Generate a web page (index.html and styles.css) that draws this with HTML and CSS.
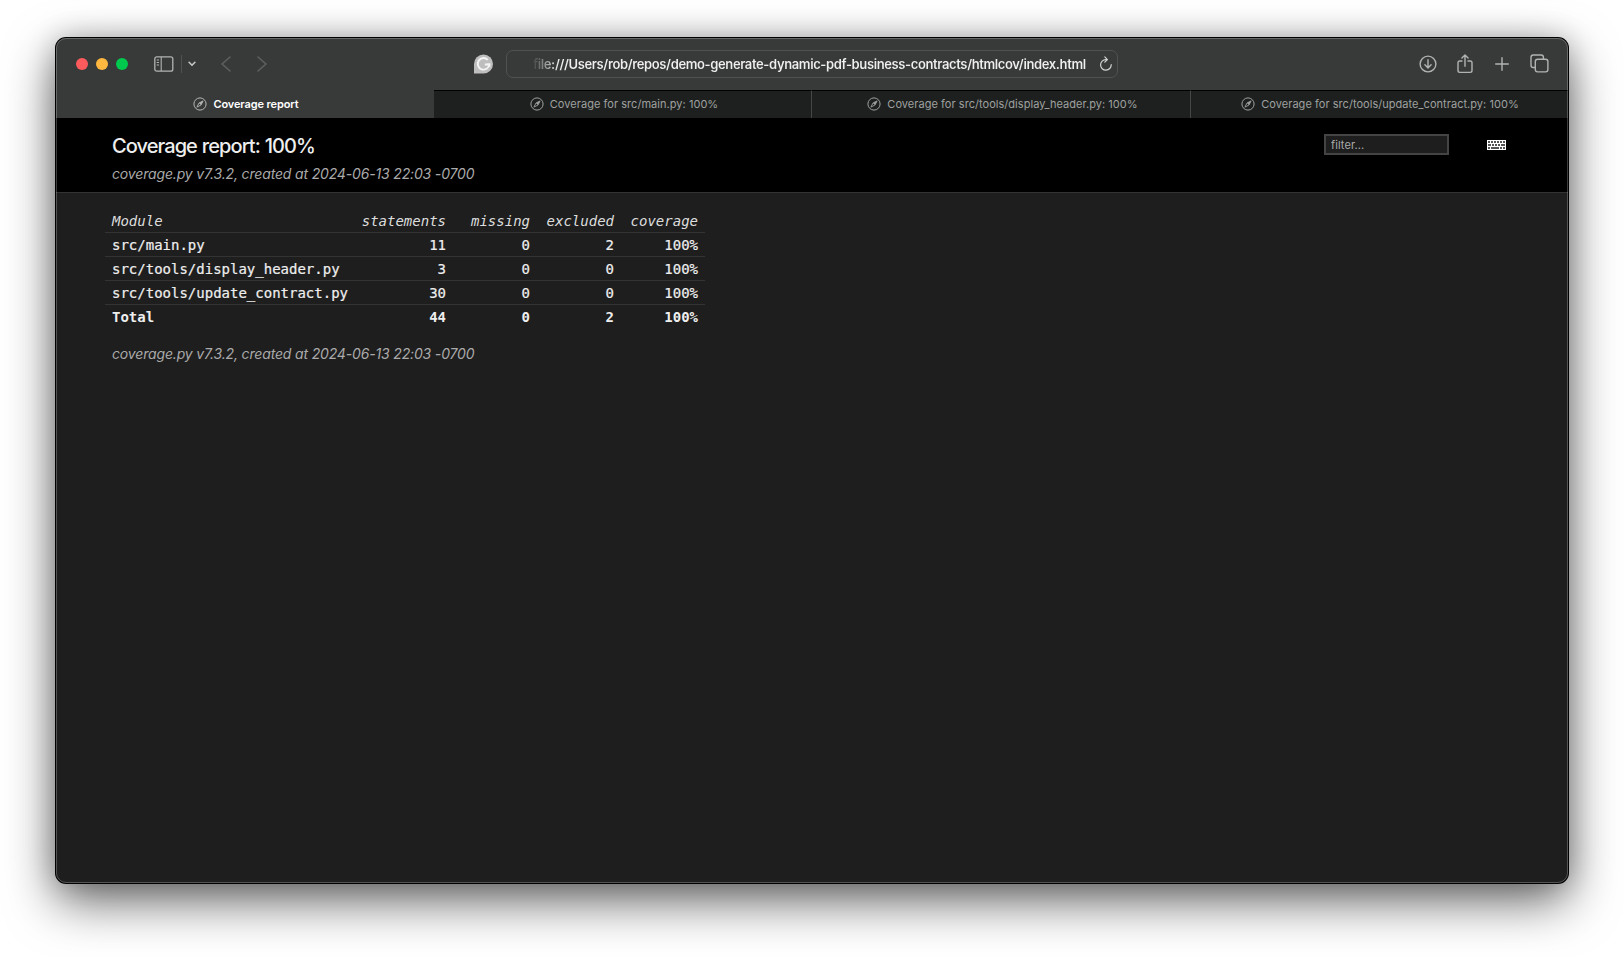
FILE: index.html
```html
<!DOCTYPE html>
<html lang="en">
<head>
<meta charset="utf-8">
<title>Coverage report</title>
<link rel="stylesheet" href="styles.css">
</head>
<body>
<svg class="defs" width="0" height="0"><symbol id="compass" viewBox="0 0 14 14"><circle cx="7" cy="7" r="6.1" fill="none" stroke="currentColor"/><path d="M10.1 3.9 8 8 3.9 10.1 6 6Z" fill="none" stroke="currentColor" stroke-width=".9" stroke-linejoin="round"/><path d="M10.1 3.9 8 8 6 6Z" fill="currentColor"/></symbol></svg>
<div class="window">
  <div class="toolbar">
    <div class="left">
      <i class="dot red"></i><i class="dot amber"></i><i class="dot green"></i>
      <svg class="sidebar" width="20" height="16" viewBox="0 0 20 16" fill="none" stroke="#b1b3b2" stroke-width="1.3"><rect x=".8" y=".8" width="18" height="14.4" rx="2"/><path d="M7.2 1v14M2.7 4h2.3M2.7 6.5h2.3M2.7 9h2.3" stroke-width="1.1"/></svg>
      <i class="divider"></i>
      <svg class="chevron" width="8" height="6" viewBox="0 0 8 6" fill="none" stroke="#c5c6c5" stroke-width="1.6" stroke-linecap="round" stroke-linejoin="round"><path d="M1.1 1.3 4 4.2 6.9 1.3"/></svg>
      <svg class="back" width="10" height="16" viewBox="0 0 10 16" fill="none" stroke="#5f6160" stroke-width="1.5" stroke-linecap="round" stroke-linejoin="round"><path d="M9 1 1 8l8 7"/></svg>
      <svg width="10" height="16" viewBox="0 0 10 16" fill="none" stroke="#5f6160" stroke-width="1.5" stroke-linecap="round" stroke-linejoin="round"><path d="m1 1 8 7-8 7"/></svg>
    </div>
    <div class="center">
      <svg width="19" height="20" viewBox="0 0 19 20"><path d="M0 19.5V10a9.5 9.5 0 1 1 9.5 9.5Z" fill="#bdbebd"/><path d="M13.8 5.9A5.8 5.8 0 1 0 15.3 10.5H10.8" fill="none" stroke="#f4f4f4" stroke-width="1.9"/><path d="M12.6 9.6h3.7v3.9Z" fill="#f4f4f4"/></svg>
      <div class="address"><span class="url">file:///Users/rob/repos/demo-generate-dynamic-pdf-business-contracts/htmlcov/index.html</span>
      <svg width="14" height="16" viewBox="0 0 14 16" fill="none" stroke="#d2d3d2" stroke-width="1.2" stroke-linecap="round" stroke-linejoin="round"><path d="M12.2 8.7A5.3 5.3 0 1 1 6.9 3.6h1.2M5.8.9l2.6 2.7-2.6 2.6"/></svg></div>
    </div>
    <div class="right">
      <svg width="18" height="18" viewBox="0 0 18 18"><circle cx="9" cy="9" r="7.9"/><path d="M9 4.8v8M5.9 9.8 9 12.9l3.1-3.1"/></svg>
      <svg class="share" width="16" height="20" viewBox="0 0 16 20"><path d="M5 7H2.8Q1 7 1 8.8v7.8q0 1.8 1.8 1.8h10.4q1.8 0 1.8-1.8V8.8Q15 7 13.2 7H11M8 12.3V1M4.9 3.9 8 .9l3.1 3"/></svg>
      <svg width="14" height="14" viewBox="0 0 14 14"><path d="M7 .7v12.6M.7 7h12.6"/></svg>
      <svg width="19" height="19" viewBox="0 0 19 19"><rect x="5.3" y="5.3" width="12.6" height="12.6" rx="2.3"/><path d="M5.3 13.5H3.2Q1 13.5 1 11.3V3.2Q1 1 3.2 1h8q2.2 0 2.2 2.2v2.1"/></svg>
    </div>
  </div>
  <div class="tabs">
    <div class="tab active"><svg width="14" height="14"><use href="#compass"/></svg><span>Coverage report</span></div>
    <div class="tab"><svg width="14" height="14"><use href="#compass"/></svg><span>Coverage for src/main.py: 100%</span></div>
    <div class="tab"><svg width="14" height="14"><use href="#compass"/></svg><span>Coverage for src/tools/display_header.py: 100%</span></div>
    <div class="tab"><svg width="14" height="14"><use href="#compass"/></svg><span>Coverage for src/tools/update_contract.py: 100%</span></div>
  </div>
  <header class="header">
    <div class="heading">
      <h1>Coverage report: 100%</h1>
      <p class="meta">coverage.py v7.3.2, created at 2024-06-13 22:03 -0700</p>
    </div>
    <input class="filter" placeholder="filter..." aria-label="filter">
    <svg class="keyboard" width="19" height="10" viewBox="0 0 19 10" shape-rendering="crispEdges"><path d="M0 0h19v10H0Z" fill="#fff"/><path d="M1 2h17M1 8h17" stroke="#555" stroke-width="2" stroke-dasharray="2 1"/><path d="M1 5h3M5 5h2M8 5h2M11 5h2M14 5h4M4 8h8" stroke="#555" stroke-width="2"/></svg>
  </header>
  <main class="content">
    <table class="index">
      <colgroup><col class="module"><col class="statements"><col class="number"><col class="number"><col class="number"></colgroup>
      <thead><tr><th>Module</th><th>statements</th><th>missing</th><th>excluded</th><th>coverage</th></tr></thead>
      <tbody>
        <tr><td>src/main.py</td><td>11</td><td>0</td><td>2</td><td>100%</td></tr>
        <tr><td>src/tools/display_header.py</td><td>3</td><td>0</td><td>0</td><td>100%</td></tr>
        <tr><td>src/tools/update_contract.py</td><td>30</td><td>0</td><td>0</td><td>100%</td></tr>
      </tbody>
      <tfoot><tr><td>Total</td><td>44</td><td>0</td><td>2</td><td>100%</td></tr></tfoot>
    </table>
    <p class="meta">coverage.py v7.3.2, created at 2024-06-13 22:03 -0700</p>
  </main>
</div>
</body>
</html>
```
FILE: styles.css
```css
* { box-sizing: border-box; }
body { margin: 0; height: 957px; overflow: hidden; padding: 38px 56px 0; background: #fff; font-family: Inter, "Liberation Sans", sans-serif; }
svg { display: block; flex: none; }
.defs { position: absolute; }
.window { position: relative; width: 1512px; height: 845px; border-radius: 10px; background: #1e1e1e; display: flex; flex-direction: column; box-shadow: 0 0 0 1px #000, 0 18px 50px rgba(0,0,0,.6), 0 0 28px rgba(0,0,0,.22); }
.window::after { content: ""; position: absolute; inset: 0; border: 1px solid rgba(255,255,255,.24); border-radius: 10px; pointer-events: none; }
.toolbar { height: 52px; display: flex; align-items: center; background: #383a39; border-radius: 10px 10px 0 0; }
.left { display: flex; align-items: center; width: 418px; padding-left: 20px; }
.dot { width: 12px; height: 12px; border-radius: 50%; margin-right: 8px; flex: none; }
.red { background: #ff5a5c; }
.amber { background: #ffb83f; }
.green { background: #00ca4e; }
.sidebar { margin-left: 18px; }
.divider { width: 1px; height: 18px; background: #505251; margin: 0 6px 0 7px; }
.back { margin: 0 26px 0 25px; }
.center { display: flex; align-items: center; gap: 13px; }
.address { width: 612px; height: 28px; border: 1px solid #505251; border-radius: 7px; display: flex; align-items: center; padding-left: 26px; gap: 11px; }
.url { width: 555px; font-size: 13px; font-weight: 600; letter-spacing: -.375px; white-space: nowrap; color: transparent; background: linear-gradient(90deg, rgba(240,240,240,.05), #efefef 26px); background-clip: text; -webkit-background-clip: text; }
.right { display: flex; align-items: center; margin-left: auto; padding: 0 19px 1px 0; }
.right svg { fill: none; stroke: #b1b3b2; stroke-width: 1.4; stroke-linecap: round; stroke-linejoin: round; }
.right svg + svg { margin-left: 20px; }
.right svg:nth-child(n+3) { margin-left: 22px; }
.right svg:nth-child(4) { margin-left: 21px; }
.tabs { display: grid; grid-template-columns: 378px 378px 379px 377px; height: 28px; }
.tab { display: flex; align-items: center; justify-content: center; gap: 6px; border-top: 1px solid #000; border-right: 1px solid #454746; background: #1e2020; color: #9fa09f; font-size: 11px; letter-spacing: .04px; white-space: nowrap; padding: 0 0 1px 3px; }
.tab:last-child { border-right: 0; padding-left: 1px; }
.active { background: #383a39; border-color: #383a39; color: #fff; font-weight: 600; letter-spacing: -.1px; }
.active svg { color: #b5b6b5; }
.header { height: 75px; display: flex; align-items: flex-start; background: #000; border-bottom: 1px solid #333; padding: 16px 62px 0 56px; }
.heading { flex: 1; }
h1 { margin: 0; font-size: 20px; line-height: 25px; font-weight: 500; letter-spacing: -.93px; word-spacing: .5px; color: #eee; white-space: nowrap; }
.meta { margin: 0; font-size: 14px; line-height: 20px; font-style: italic; letter-spacing: -.16px; color: #aaa; width: max-content; }
.heading .meta { margin-top: 5px; }
.filter { width: 125px; height: 21px; border: 2px solid #444; background: #1e1e1e; padding: 0 5px; font: 11px Inter, sans-serif; letter-spacing: .1px; border-radius: 0; }
.filter::placeholder { color: #aaa; opacity: 1; }
.keyboard { margin: 6px 0 0 38px; }
.content { padding: 16px 49px; }
.index { table-layout: fixed; border-collapse: separate; border-spacing: 0; width: 600px; font: 14px/20px "DejaVu Sans Mono", monospace; color: #eee; }
.module { width: 243px; }
.statements { width: 105px; }
.number { width: 84px; }
.index tr { height: 24px; }
.index th, .index td { padding: 0 7px; text-align: right; border-bottom: 1px solid #333; white-space: nowrap; }
.index td { -webkit-text-stroke: .2px #eee; }
.index th { font-weight: 400; font-style: italic; color: #ddd; }
.index th:first-child, .index td:first-child { text-align: left; }
.index tfoot td { font-weight: 700; border-bottom: 0; padding-bottom: 1px; -webkit-text-stroke: 0; }
.content .meta { margin: 15px 0 0 7px; }
```
